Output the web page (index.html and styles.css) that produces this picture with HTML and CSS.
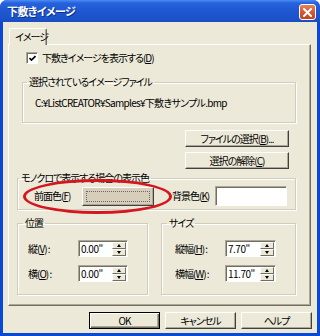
FILE: index.html
```html
<!DOCTYPE html>
<html lang="ja">
<head>
<meta charset="utf-8">
<link rel="stylesheet" href="styles.css">
</head>
<body>
<div class="window">
  <div class="titlebar">
    <span class="title">下敷きイメージ</span>
    <span class="close"><svg width="9" height="9" viewBox="0 0 9 9"><path d="M1 1L8 8M8 1L1 8" stroke="#fff" stroke-width="2" stroke-linecap="square"/></svg></span>
  </div>
  <div class="client">
    <div class="tabs"><div class="tab"><span class="tab-label">イメージ</span></div></div>
    <div class="panel">
      <div class="check-row">
        <span class="checkbox"><svg width="7" height="7" viewBox="0 0 7 7"><path d="M0.5 3L2.5 5L6.5 1" fill="none" stroke="#000" stroke-width="1.6"/></svg></span>
        <span>下敷きイメージを表示する(<u>D</u>)</span>
      </div>
      <fieldset class="group g-file">
        <legend>選択されているイメージファイル</legend>
        <div class="path">C:¥ListCREATOR¥Samples¥下敷きサンプル.bmp</div>
      </fieldset>
      <div class="file-buttons">
        <div class="btn btn-file">ファイルの選択(<u>B</u>)...</div>
        <div class="btn btn-file">選択の解除(<u>C</u>)</div>
      </div>
      <fieldset class="group g-color">
        <legend>モノクロで表示する場合の表示色</legend>
        <div class="color-row">
          <span class="lbl">前面色(<u>F</u>)</span>
          <div class="btn swatch"><span class="focus"></span></div>
          <span class="lbl lbl-bg">背景色(<u>K</u>)</span>
          <div class="bg-box"></div>
        </div>
        <div class="ellipse"></div>
      </fieldset>
      <div class="pos-size">
        <fieldset class="group g-pos">
          <legend>位置</legend>
          <div class="field-row first">
            <span class="lbl">縦(<u>V</u>) :</span>
            <div class="spin"><span class="val">0.00"</span><span class="arrows"><span class="arr up"></span><span class="arr down"></span></span></div>
          </div>
          <div class="field-row">
            <span class="lbl">横(<u>O</u>) :</span>
            <div class="spin"><span class="val">0.00"</span><span class="arrows"><span class="arr up"></span><span class="arr down"></span></span></div>
          </div>
        </fieldset>
        <fieldset class="group g-size">
          <legend>サイズ</legend>
          <div class="field-row first">
            <span class="lbl">縦幅(<u>H</u>) :</span>
            <div class="spin"><span class="val">7.70"</span><span class="arrows"><span class="arr up"></span><span class="arr down"></span></span></div>
          </div>
          <div class="field-row">
            <span class="lbl">横幅(<u>W</u>) :</span>
            <div class="spin"><span class="val">11.70"</span><span class="arrows"><span class="arr up"></span><span class="arr down"></span></span></div>
          </div>
        </fieldset>
      </div>
    </div>
    <div class="dialog-buttons">
      <div class="btn dlg default">OK</div>
      <div class="btn dlg">キャンセル</div>
      <div class="btn dlg">ヘルプ</div>
    </div>
  </div>
</div>
</body>
</html>
```

FILE: styles.css
```css
* { box-sizing: border-box; margin: 0; padding: 0; }
html, body { width: 320px; height: 336px; overflow: hidden; background: #fff; }
body {
  font-family: "Noto Sans CJK JP", "Noto Sans", sans-serif;
  font-size: 10px;
  letter-spacing: -1px;
  line-height: 14px;
  color: #000;
  font-feature-settings: "palt";
  white-space: nowrap;
}
u { text-decoration: underline; text-underline-offset: 1px; }

.window {
  width: 320px;
  height: 336px;
  display: flex;
  flex-direction: column;
  background: #0A48D6;
  border-radius: 7px 7px 0 0;
  padding: 0 3px 3px;
}

.titlebar {
  height: 22px;
  margin: 0 -3px;
  border-radius: 7px 7px 0 0;
  background: linear-gradient(#4A8CF6 0, #2762DC 3px, #1F58D2 10px, #1B53CA 18px, #1A4EC2 22px);
  display: flex;
  align-items: center;
  justify-content: space-between;
  padding: 0 4px 0 7px;
}
.title {
  color: #fff;
  font-weight: bold;
  font-size: 11px;
  letter-spacing: -0.6px;
  text-shadow: 1px 1px 0 #0F2F8A;
}
.close {
  width: 17px;
  height: 16px;
  margin-top: 2px;
  border: 1px solid #fff;
  border-radius: 3px;
  background: linear-gradient(#E6825C, #D35A32 50%, #C24520);
  display: flex;
  align-items: center;
  justify-content: center;
}

.client {
  flex: 1;
  background: #ECE9D8;
  padding: 6px 6px 0 5px;
  display: flex;
  flex-direction: column;
}

.tabs { height: 16px; display: flex; position: relative; z-index: 1; }
.tab {
  margin-left: 1px;
  width: 38px;
  height: 17px;
  background: #ECE9D8;
  border-top: 1px solid #fff;
  border-left: 1px solid #fff;
  border-right: 1px solid #716F64;
  box-shadow: inset -1px 0 0 #ACA899;
  border-radius: 2px 2px 0 0;
  padding: 1px 0 0 5px;
}
.tab-label { line-height: 14px; }

.panel {
  height: 262px;
  border: 1px solid;
  border-color: #fff #716F64 #716F64 #fff;
  box-shadow: inset -1px -1px 0 #ACA899;
  display: flex;
  flex-direction: column;
  align-items: flex-start;
}

.check-row {
  margin: 6px 0 0 17px;
  height: 13px;
  display: flex;
  align-items: center;
  gap: 4px;
}
.checkbox {
  width: 12px;
  height: 12px;
  background: #fff;
  border: 1px solid;
  border-color: #ACA899 #fff #fff #ACA899;
  box-shadow: inset 1px 1px 0 #716F64;
  display: flex;
  align-items: center;
  justify-content: center;
  padding: 1px 0 0 1px;
}

.group {
  border: 1px solid #D0CDBD;
  border-radius: 0;
  box-shadow: inset 1px 1px 0 #fff, 1px 1px 0 #fff;
  min-width: 0;
}
.group legend {
  padding: 0 2px;
  line-height: 14px;
  margin-left: 4px;
}

.g-file { margin: 11px 0 0 13px; width: 274px; height: 48px; }
.path { margin: 7px 0 0 12px; letter-spacing: -0.7px; }

.file-buttons {
  align-self: flex-end;
  margin: 7px 21px 0 0;
  display: flex;
  flex-direction: column;
  gap: 5px;
}

.btn {
  background: #ECE9D8;
  border: 1px solid;
  border-color: #fff #404040 #404040 #fff;
  box-shadow: inset -1px -1px 0 #ACA899;
  display: flex;
  align-items: center;
  justify-content: center;
  line-height: 14px;
}
.btn-file { width: 104px; height: 17px; }

.g-color {
  position: relative;
  margin: 2px 0 0 8px;
  width: 279px;
  height: 39px;
}
.g-color legend { margin-left: 1px; }
.color-row {
  margin: 1px 0 0 16px;
  display: grid;
  grid-template-columns: 48px 72px 18px 43px 72px;
  align-items: center;
  height: 20px;
}
.lbl { overflow: hidden; }
.swatch { height: 19px; background: #D6CDBB; padding: 3px; }
.focus { width: 100%; height: 100%; border: 1px dotted #6E6A60; }
.color-row .lbl-bg { grid-column: 4; }
.bg-box {
  grid-column: 5;
  height: 20px;
  background: #fff;
  border: 1px solid;
  border-color: #ACA899 #fff #fff #ACA899;
  box-shadow: inset 1px 1px 0 #716F64;
}
.ellipse {
  position: absolute;
  left: 5px;
  top: -6px;
  width: 149px;
  height: 35px;
  border: 3px solid #D5161E;
  border-radius: 50%;
}

.pos-size {
  margin: 6px 0 0 8px;
  display: flex;
  gap: 13px;
}
.g-pos { width: 131px; height: 79px; }
.g-size { width: 135px; height: 79px; }
.g-pos legend, .g-size legend { margin-left: 5px; }

.field-row {
  display: grid;
  grid-template-columns: 50px 50px;
  align-items: center;
  height: 17px;
  margin: 8px 0 0 10px;
}
.g-size .field-row { grid-template-columns: 50px 51px; margin-left: 13px; }
.field-row.first { margin-top: 10px; }

.spin {
  height: 17px;
  background: #fff;
  border: 1px solid;
  border-color: #ACA899 #fff #fff #ACA899;
  box-shadow: inset 1px 1px 0 #716F64;
  display: flex;
  justify-content: space-between;
  padding: 1px 1px 0 2px;
}
.val { line-height: 13px; letter-spacing: -0.5px; }
.arrows { width: 14px; display: flex; flex-direction: column; }
.arr {
  flex: 1;
  background: #ECE9D8;
  border: 1px solid;
  border-color: #fff #716F64 #716F64 #fff;
  display: flex;
  align-items: center;
  justify-content: center;
}
.arr::after {
  content: "";
  width: 0;
  height: 0;
  border-left: 2.5px solid transparent;
  border-right: 2.5px solid transparent;
}
.up::after { border-bottom: 3px solid #000; }
.down::after { border-top: 3px solid #000; }

.dialog-buttons {
  margin: 6px -1px 0 0;
  display: flex;
  justify-content: flex-end;
  gap: 5px;
}
.dlg { width: 71px; height: 17px; }
.default {
  border: 1px solid #000;
  box-shadow: inset 1px 1px 0 #fff, inset -1px -1px 0 #716F64, inset -2px -2px 0 #ACA899;
}
```
